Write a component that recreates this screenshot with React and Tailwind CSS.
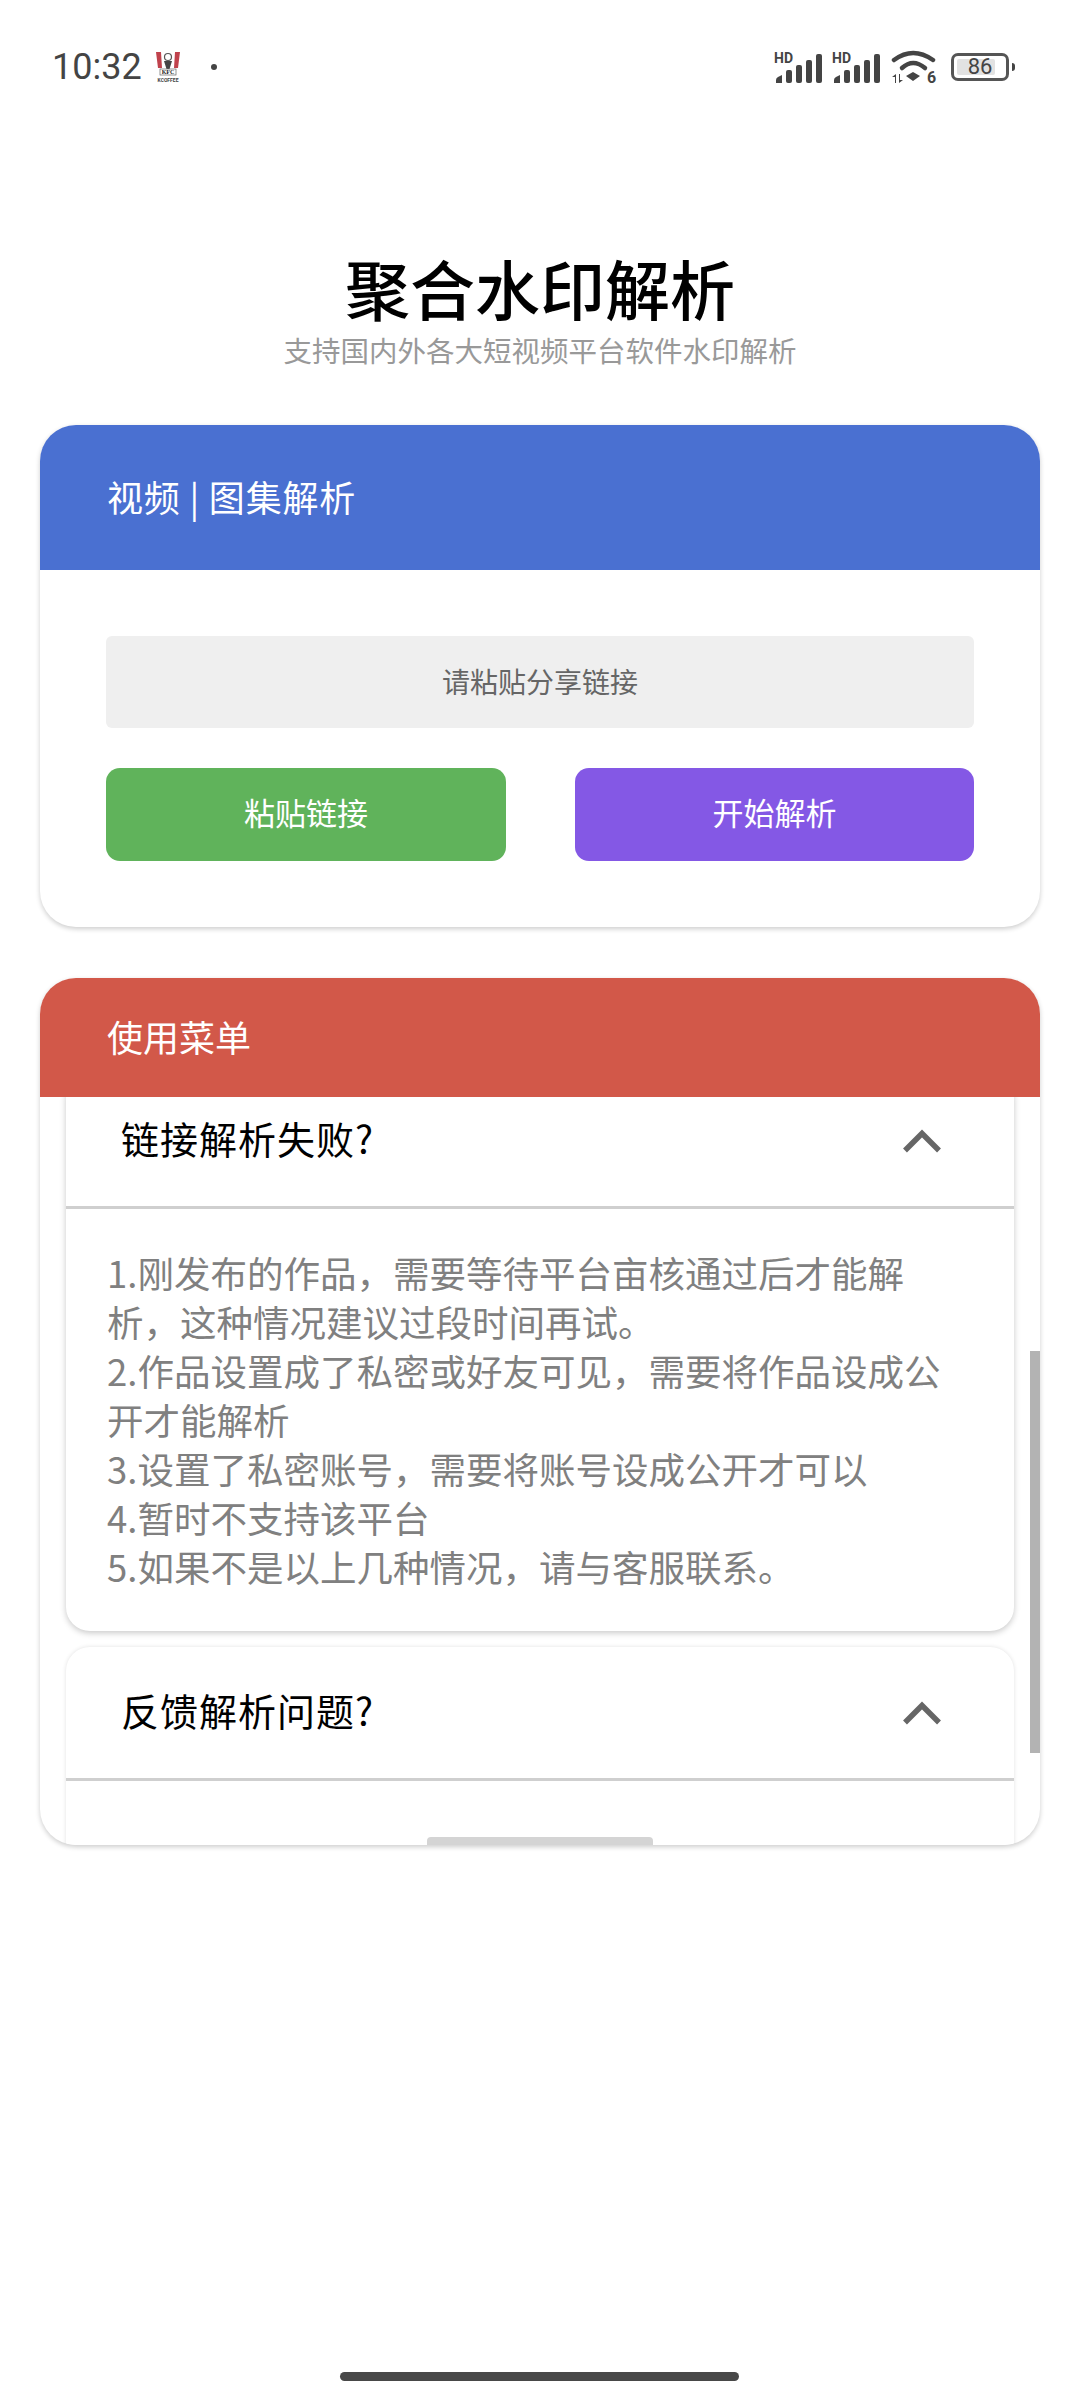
import React from 'react';

const cjk = { fontFamily: '"Noto Sans CJK SC", "Noto Sans", Roboto, sans-serif' };

const SignalIcon = () => (
  <svg width="58" height="32" viewBox="0 0 58 32" className="block">
    <text x="0" y="12" fontFamily="Roboto, sans-serif" fontWeight="700" fontSize="14" fill="#444">HD</text>
    <path d="M2 32v-3q0-2 2-3l4-2v8z" fill="#444" />
    <rect x="12" y="19" width="6" height="13" rx="2" fill="#444" />
    <rect x="22" y="14" width="6" height="18" rx="2" fill="#444" />
    <rect x="32" y="9" width="6" height="23" rx="2" fill="#444" />
    <rect x="42" y="3" width="6" height="29" rx="2" fill="#444" />
  </svg>
);

const WifiIcon = () => (
  <svg width="46" height="38" viewBox="0 0 46 38" className="block">
    <path d="M3 12Q22 -2 42 12" fill="none" stroke="#444" strokeWidth="4.500" strokeLinecap="round" />
    <path d="M11 20Q22 10 34 20" fill="none" stroke="#444" strokeWidth="4.500" strokeLinecap="round" />
    <path d="M15 28L22 24L29 28L22 33z" fill="#444" />
    <path d="M4 35v-6H1l4-3v9zM8 26v9l4-3H9v-6z" fill="#444" />
    <text x="36" y="35" fontFamily="Roboto, sans-serif" fontWeight="700" fontSize="16" fill="#444">6</text>
  </svg>
);

const KfcIcon = () => (
  <svg width="26" height="32" viewBox="0 0 26 32" className="block">
    <path d="M1 1h24l-2 16H3z" fill="#fff" />
    <path d="M1 1h5l1 16H3zM25 1h-5l-1 16h4z" fill="#c0424c" />
    <circle cx="13" cy="6" r="3.500" fill="#fff" stroke="#555" strokeWidth="1.200" />
    <path d="M9 10h8l-2.500 8h-3z" fill="#444" />
    <rect x="5" y="18" width="16" height="6" fill="#fff" stroke="#666" strokeWidth="0.700" />
    <text x="13" y="23.400" textAnchor="middle" fontFamily="Liberation Serif, serif" fontWeight="700" fontSize="6" fill="#222">KFC</text>
    <text x="13" y="31" textAnchor="middle" fontFamily="Roboto, sans-serif" fontWeight="700" fontSize="5" fill="#444">KCOFFEE</text>
  </svg>
);

const Chevron = () => (
  <svg width="40" height="24" viewBox="0 0 40 24" className="block">
    <path d="M3 21.500L20 4.500L37 21.500" fill="none" stroke="#666" strokeWidth="5.500" />
  </svg>
);

const StatusBar = () => (
  <div className="flex items-center justify-between h-[136px] pl-[52px] pr-[65px] pb-[2px]">
    <div className="flex items-center">
      <span className="text-[36px] leading-none text-[#444]" style={{ fontFamily: 'Roboto, sans-serif' }}>10:32</span>
      <div className="ml-[13px]"><KfcIcon /></div>
      <div className="ml-[30px] w-[6px] h-[6px] rounded-full bg-[#444]" />
    </div>
    <div className="flex items-center">
      <SignalIcon />
      <SignalIcon />
      <div className="ml-[1px]"><WifiIcon /></div>
      <div className="ml-[14px] relative flex items-center justify-center w-[58px] h-[28px] rounded-[7px] border-[3px] border-[#555]">
        <div className="absolute left-[3px] top-[3px] bottom-[3px] w-[38px] rounded-[2px] bg-[#e2e2e2]" />
        <span className="relative text-[22px] leading-none text-[#444]" style={{ fontFamily: 'Roboto, sans-serif' }}>86</span>
      </div>
      <div className="ml-[3px] w-[3px] h-[8px] rounded-r-sm bg-[#444]" />
    </div>
  </div>
);

const AccordionHead = ({ title }) => (
  <div className="flex items-center justify-between h-[134px] pl-[55px] pr-[72px] border-b-[3px] border-[#cfcfcf]">
    <span className="mb-[6px] text-[38px] leading-none tracking-[1px] text-black">{title}</span>
    <Chevron />
  </div>
);

const answers = [
  '1.刚发布的作品，需要等待平台亩核通过后才能解析，这种情况建议过段时间再试。',
  '2.作品设置成了私密或好友可见，需要将作品设成公开才能解析',
  '3.设置了私密账号，需要将账号设成公开才可以',
  '4.暂时不支持该平台',
  '5.如果不是以上几种情况，请与客服联系。',
];

export default function App() {
  return (
    <div className="relative w-[1080px] h-[2400px] bg-white overflow-hidden" style={cjk}>
      <StatusBar />

      <div className="flex flex-col items-center mt-[113px]">
        <h1 className="text-[65px] leading-[76px] font-medium text-black">聚合水印解析</h1>
        <p className="mt-[6px] text-[28.500px] leading-[38px] text-[#999]">支持国内外各大短视频平台软件水印解析</p>
      </div>

      <div className="mx-[40px] mt-[56px] h-[502px] rounded-[36px] bg-white overflow-hidden shadow-[0_2px_5px_rgba(0,0,0,0.2)]">
        <div className="flex items-center h-[145px] pl-[67px] pb-[4px] bg-[#4a70d1] text-white text-[36px] tracking-[0.800px] leading-none">视频 | 图集解析</div>
        <div className="px-[66px] pt-[66px]">
          <div className="flex items-center justify-center h-[92px] pb-[3px] rounded-[6px] bg-[#efefef] text-[28px] text-[#666]">请粘贴分享链接</div>
          <div className="flex justify-between mt-[40px]">
            <button className="w-[400px] h-[93px] pb-[4px] rounded-[14px] bg-[#60b35b] text-white text-[31px]">粘贴链接</button>
            <button className="w-[399px] h-[93px] pb-[4px] rounded-[14px] bg-[#8458e5] text-white text-[31px]">开始解析</button>
          </div>
        </div>
      </div>

      <div className="relative mx-[40px] mt-[51px] h-[867px] rounded-[36px] bg-white overflow-hidden shadow-[0_2px_5px_rgba(0,0,0,0.2)]">
        <div className="relative z-10 flex items-center h-[119px] pl-[67px] pb-[4px] bg-[#d25849] text-white text-[36px] leading-none">使用菜单</div>
        <div className="h-[748px] overflow-hidden px-[26px]">
          <div className="-mt-[22px]">
            <div className="rounded-[24px] bg-white shadow-[0_2px_6px_rgba(0,0,0,0.22)]">
              <AccordionHead title="链接解析失败?" />
              <div className="pl-[41px] pr-[53px] pt-[39px] pb-[40px] text-[36.500px] leading-[49px] text-[#808080]">
                {answers.map((line) => (
                  <div key={line}>{line}</div>
                ))}
              </div>
            </div>
            <div className="mt-[16px] rounded-t-[24px] h-[400px] bg-white shadow-[0_0_4px_rgba(0,0,0,0.12)]">
              <AccordionHead title="反馈解析问题?" />
            </div>
          </div>
        </div>
        {/* scrollbars sit over the list */}
        <div className="absolute right-0 top-[373px] w-[10px] h-[402px] bg-[#b3b3b3]" />
        <div className="absolute left-[387px] bottom-0 w-[226px] h-[8px] rounded-t-[4px] bg-[#d4d4d4]" />
      </div>

      <div className="absolute left-[340px] top-[2372px] w-[399px] h-[9px] rounded-full bg-[#484848]" />
    </div>
  );
}
